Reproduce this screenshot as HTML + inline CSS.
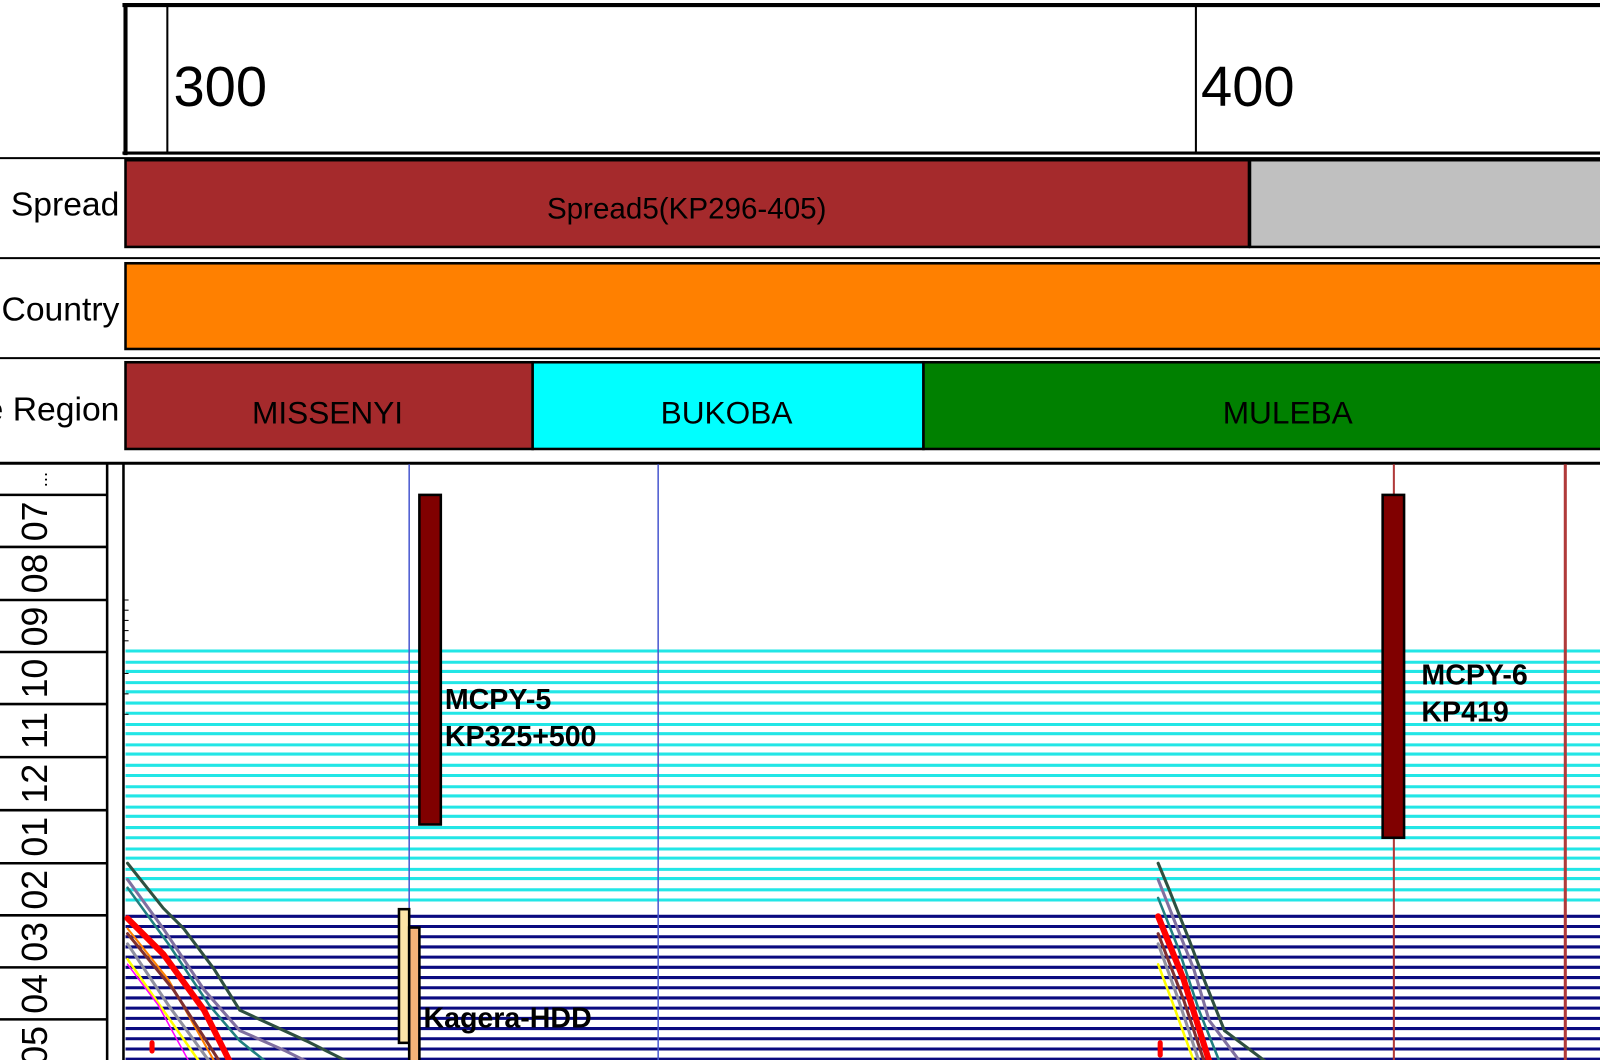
<!DOCTYPE html>
<html><head><meta charset="utf-8"><style>
html,body{margin:0;padding:0;background:#fff;width:1600px;height:1060px;overflow:hidden}
svg{display:block;font-family:"Liberation Sans",Arial,sans-serif}
</style></head><body>
<svg width="1600" height="1060" viewBox="0 0 1600 1060" xmlns="http://www.w3.org/2000/svg">
<rect width="1600" height="1060" fill="#fff"/>
<g transform="scale(1.0204)">
<line x1="120" y1="5" x2="1600" y2="5" stroke="#000" stroke-width="4"/>
<line x1="123" y1="4" x2="123" y2="152" stroke="#000" stroke-width="4"/>
<line x1="164" y1="5" x2="164" y2="150" stroke="#000" stroke-width="2"/>
<line x1="1172" y1="5" x2="1172" y2="150" stroke="#000" stroke-width="2"/>
<line x1="120" y1="150" x2="1600" y2="150" stroke="#000" stroke-width="3"/>
<line x1="0" y1="155" x2="1600" y2="155" stroke="#000" stroke-width="2"/>
<text x="170" y="104" font-size="55">300</text>
<text x="1177" y="104" font-size="55">400</text>
<rect x="123" y="157" width="1101" height="85" fill="#a52a2c" stroke="#000" stroke-width="2.5"/>
<rect x="1225" y="157" width="380" height="85" fill="#c0c0c0" stroke="#000" stroke-width="2.5"/>
<text x="673" y="214" font-size="29" text-anchor="middle" fill="#000">Spread5(KP296-405)</text>
<text x="117" y="211" font-size="33" text-anchor="end">Spread</text>
<line x1="0" y1="253" x2="1600" y2="253" stroke="#000" stroke-width="2"/>
<rect x="123" y="258" width="1482" height="84" fill="#ff8000" stroke="#000" stroke-width="2.5"/>
<text x="117" y="314" font-size="33" text-anchor="end">Country</text>
<line x1="0" y1="351" x2="1600" y2="351" stroke="#000" stroke-width="2"/>
<rect x="123" y="355" width="399" height="85" fill="#a52a2c" stroke="#000" stroke-width="2.5"/>
<rect x="522" y="355" width="383" height="85" fill="#00ffff" stroke="#000" stroke-width="2.5"/>
<rect x="905" y="355" width="700" height="85" fill="#008000" stroke="#000" stroke-width="2.5"/>
<text x="321" y="415" font-size="31" text-anchor="middle">MISSENYI</text>
<text x="712" y="415" font-size="31" text-anchor="middle">BUKOBA</text>
<text x="1262" y="415" font-size="31" text-anchor="middle">MULEBA</text>
<text x="117" y="412" font-size="33" text-anchor="end">e Region</text>
<line x1="0" y1="454" x2="1600" y2="454" stroke="#000" stroke-width="3"/>
<line x1="105" y1="454" x2="105" y2="1060" stroke="#000" stroke-width="2.5"/>
<line x1="121" y1="454" x2="121" y2="1060" stroke="#000" stroke-width="2.5"/>
<g stroke="#000" stroke-width="2.5">
<line x1="0" y1="485" x2="105" y2="485"/><line x1="0" y1="536" x2="105" y2="536"/>
<line x1="0" y1="588" x2="105" y2="588"/><line x1="0" y1="639" x2="105" y2="639"/>
<line x1="0" y1="690" x2="105" y2="690"/><line x1="0" y1="742" x2="105" y2="742"/>
<line x1="0" y1="794" x2="105" y2="794"/><line x1="0" y1="846" x2="105" y2="846"/>
<line x1="0" y1="897" x2="105" y2="897"/><line x1="0" y1="948" x2="105" y2="948"/>
<line x1="0" y1="999" x2="105" y2="999"/>
</g>
<g font-size="35" text-anchor="middle">
<text transform="translate(46,511) rotate(-90)">07</text>
<text transform="translate(46,562) rotate(-90)">08</text>
<text transform="translate(46,614) rotate(-90)">09</text>
<text transform="translate(46,665) rotate(-90)">10</text>
<text transform="translate(46,716) rotate(-90)">11</text>
<text transform="translate(46,768) rotate(-90)">12</text>
<text transform="translate(46,820) rotate(-90)">01</text>
<text transform="translate(46,872) rotate(-90)">02</text>
<text transform="translate(46,923) rotate(-90)">03</text>
<text transform="translate(46,974) rotate(-90)">04</text>
<text transform="translate(46,1025) rotate(-90)">05</text>
<text transform="translate(46,470) rotate(-90)" font-size="18">...</text>
</g>
<g stroke="#22e6e6" stroke-width="3">
<line x1="123" y1="638" x2="1600" y2="638"/><line x1="123" y1="649" x2="1600" y2="649"/>
<line x1="123" y1="658" x2="1600" y2="658"/><line x1="123" y1="669" x2="1600" y2="669"/>
<line x1="123" y1="678" x2="1600" y2="678"/><line x1="123" y1="689" x2="1600" y2="689"/>
<line x1="123" y1="699" x2="1600" y2="699"/><line x1="123" y1="710" x2="1600" y2="710"/>
<line x1="123" y1="719" x2="1600" y2="719"/><line x1="123" y1="730" x2="1600" y2="730"/>
<line x1="123" y1="739" x2="1600" y2="739"/><line x1="123" y1="750" x2="1600" y2="750"/>
<line x1="123" y1="760" x2="1600" y2="760"/><line x1="123" y1="771" x2="1600" y2="771"/>
<line x1="123" y1="780" x2="1600" y2="780"/><line x1="123" y1="791" x2="1600" y2="791"/>
<line x1="123" y1="800" x2="1600" y2="800"/><line x1="123" y1="811" x2="1600" y2="811"/>
<line x1="123" y1="821" x2="1600" y2="821"/><line x1="123" y1="832" x2="1600" y2="832"/>
<line x1="123" y1="841" x2="1600" y2="841"/><line x1="123" y1="852" x2="1600" y2="852"/>
<line x1="123" y1="861" x2="1600" y2="861"/><line x1="123" y1="872" x2="1600" y2="872"/>
<line x1="123" y1="882" x2="1600" y2="882"/>
</g>
<g stroke="#0a0a80" stroke-width="3">
<line x1="123" y1="898" x2="1600" y2="898"/><line x1="123" y1="908" x2="1600" y2="908"/>
<line x1="123" y1="918" x2="1600" y2="918"/><line x1="123" y1="928" x2="1600" y2="928"/>
<line x1="123" y1="938" x2="1600" y2="938"/><line x1="123" y1="948" x2="1600" y2="948"/>
<line x1="123" y1="958" x2="1600" y2="958"/><line x1="123" y1="968" x2="1600" y2="968"/>
<line x1="123" y1="978" x2="1600" y2="978"/><line x1="123" y1="988" x2="1600" y2="988"/>
<line x1="123" y1="998" x2="1600" y2="998"/><line x1="123" y1="1008" x2="1600" y2="1008"/>
<line x1="123" y1="1018" x2="1600" y2="1018"/><line x1="123" y1="1028" x2="1600" y2="1028"/>
<line x1="123" y1="1038" x2="1600" y2="1038"/>
</g>
<line x1="401" y1="455" x2="401" y2="1060" stroke="#4a5ad0" stroke-width="1.5"/>
<line x1="645" y1="455" x2="645" y2="1060" stroke="#4a5ad0" stroke-width="1.5"/>
<line x1="1366" y1="455" x2="1366" y2="1060" stroke="#b03a3a" stroke-width="2"/>
<line x1="1534" y1="455" x2="1534" y2="1060" stroke="#b03a3a" stroke-width="3"/>
<rect x="411" y="485" width="21" height="323" fill="#800000" stroke="#000" stroke-width="2.5"/>
<rect x="1355" y="485" width="21" height="336" fill="#800000" stroke="#000" stroke-width="2.5"/>
<rect x="391" y="891" width="10" height="131" fill="#fde4a8" stroke="#000" stroke-width="2.5"/>
<rect x="401" y="909" width="10" height="150" fill="#f5b478" stroke="#000" stroke-width="2.5"/>
<g font-size="28" font-weight="bold">
<text x="436" y="695">MCPY-5</text><text x="436" y="731">KP325+500</text>
<text x="1393" y="671">MCPY-6</text><text x="1393" y="707">KP419</text>
<text x="415" y="1007">Kagera-HDD</text>
</g>
<g fill="none" stroke-linecap="round">
<polyline points="125,846 160,890 180,910 210,950 235,990 300,1020 340,1040" stroke="#2f5040" stroke-width="3"/>
<polyline points="125,862 160,910 200,970 235,1010 280,1030 300,1040" stroke="#8070a0" stroke-width="3"/>
<polyline points="125,870 165,925 205,985 235,1020 260,1040" stroke="#208080" stroke-width="2.5"/>
<polyline points="125,900 160,935 200,990 225,1040" stroke="#ff0000" stroke-width="6"/>
<polyline points="125,910 165,960 210,1040" stroke="#ff8000" stroke-width="2"/>
<polyline points="125,915 170,970 215,1040" stroke="#803030" stroke-width="3"/>
<polyline points="125,925 165,985 205,1040" stroke="#9090a0" stroke-width="3"/>
<polyline points="125,940 160,990 195,1040" stroke="#ffff00" stroke-width="2.5"/>
<polyline points="125,945 155,985 185,1040" stroke="#ff00ff" stroke-width="1.5"/>
<line x1="149" y1="1022" x2="149" y2="1030" stroke="#f00" stroke-width="5"/>
<polyline points="1135,846 1145,870 1165,920 1180,960 1200,1010 1240,1040" stroke="#2f5040" stroke-width="3"/>
<polyline points="1135,862 1150,900 1170,950 1185,1000 1215,1040" stroke="#8070a0" stroke-width="3"/>
<polyline points="1135,880 1155,930 1175,990 1195,1040" stroke="#208080" stroke-width="2.5"/>
<polyline points="1135,898 1160,960 1185,1040" stroke="#ff0000" stroke-width="6"/>
<polyline points="1135,915 1160,980 1180,1040" stroke="#803030" stroke-width="3"/>
<polyline points="1135,925 1155,980 1175,1040" stroke="#9090a0" stroke-width="3"/>
<polyline points="1135,945 1150,985 1170,1040" stroke="#ffff00" stroke-width="2.5"/>
<line x1="1137" y1="1022" x2="1137" y2="1034" stroke="#f00" stroke-width="5"/>
</g>
<g stroke="#000" stroke-width="1">
<line x1="121" y1="588" x2="126" y2="588"/><line x1="121" y1="598" x2="126" y2="598"/>
<line x1="121" y1="608" x2="126" y2="608"/><line x1="121" y1="618" x2="126" y2="618"/>
<line x1="121" y1="628" x2="126" y2="628"/><line x1="121" y1="660" x2="126" y2="660"/>
<line x1="121" y1="680" x2="126" y2="680"/><line x1="121" y1="700" x2="126" y2="700"/>
</g>
</g>
</svg>
</body></html>
